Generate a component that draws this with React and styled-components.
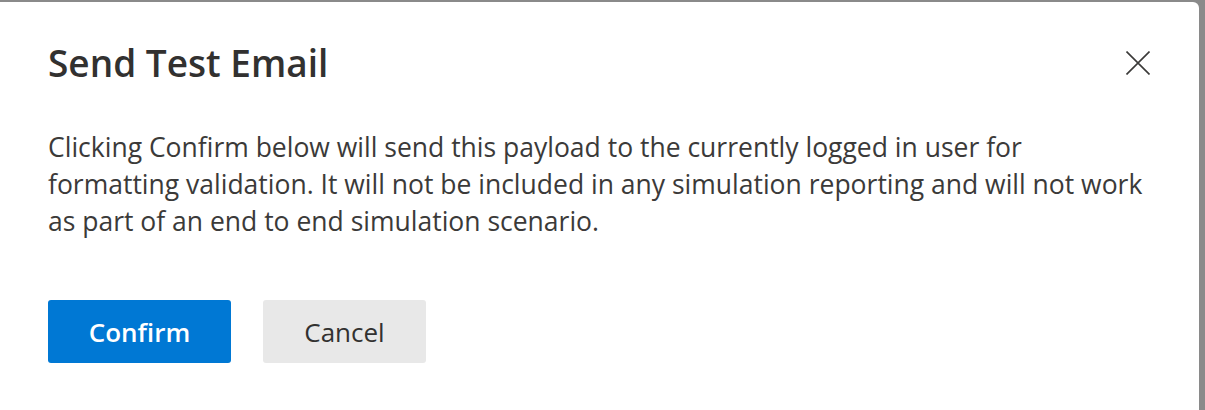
import styled, { createGlobalStyle } from "styled-components";

const GlobalStyle = createGlobalStyle`
  html, body {
    margin: 0;
    padding: 0;
    background: #8a8a8a;
    height: 410px;
    overflow: hidden;
  }
  body {
    font-family: "Open Sans", "Noto Sans", Arial, sans-serif;
  }
`;

const Backdrop = styled.div`
  width: 1205px;
  height: 410px;
  padding-top: 2px;
  box-sizing: border-box;
`;

const Dialog = styled.div`
  width: 1199px;
  height: 408px;
  background: #ffffff;
  border-top-right-radius: 6px;
  box-sizing: border-box;
  padding: 41px 48px 0 48px;
  display: flex;
  flex-direction: column;
`;

const Header = styled.div`
  display: flex;
  align-items: center;
  justify-content: space-between;
  height: 40px;
`;

const Title = styled.h1`
  margin: 0;
  font-size: 37px;
  line-height: 40px;
  font-weight: 600;
  color: #323130;
`;

const CloseButton = styled.button`
  border: none;
  background: transparent;
  padding: 0;
  width: 24px;
  height: 24px;
  margin-right: 1px;
  display: flex;
  align-items: center;
  justify-content: center;
  cursor: pointer;
`;

const Body = styled.p`
  width: 1100px;
  margin: 46px 0 0 0;
  font-size: 26.5px;
  line-height: 37px;
  color: #3b3a39;
`;

const Actions = styled.div`
  display: flex;
  gap: 32px;
  margin-top: 60px;
`;

const Button = styled.button`
  height: 63px;
  width: ${(p) => p.$width}px;
  padding: 0;
  border: none;
  border-radius: 3px;
  font-family: inherit;
  font-size: 26px;
  font-weight: ${(p) => (p.$primary ? 600 : 500)};
  background: ${(p) => (p.$primary ? "#0078d4" : "#e8e8e8")};
  color: ${(p) => (p.$primary ? "#ffffff" : "#323130")};
  cursor: pointer;
`;

const CloseIcon = () => (
  <svg width="24" height="24" viewBox="0 0 24 24">
    <path d="M0.5 0.5 L23.5 23.5 M23.5 0.5 L0.5 23.5" stroke="#3b3a39" strokeWidth="1.6" fill="none" />
  </svg>
);

export default function App() {
  return (
    <>
      <GlobalStyle />
      <Backdrop>
        <Dialog>
          <Header>
            <Title>Send Test Email</Title>
            <CloseButton aria-label="Close">
              <CloseIcon />
            </CloseButton>
          </Header>
          <Body>
            Clicking Confirm below will send this payload to the currently logged in user for
            formatting validation. It will not be included in any simulation reporting and will not
            work as part of an end to end simulation scenario.
          </Body>
          <Actions>
            <Button $primary $width={183}>Confirm</Button>
            <Button $width={163}>Cancel</Button>
          </Actions>
        </Dialog>
      </Backdrop>
    </>
  );
}
